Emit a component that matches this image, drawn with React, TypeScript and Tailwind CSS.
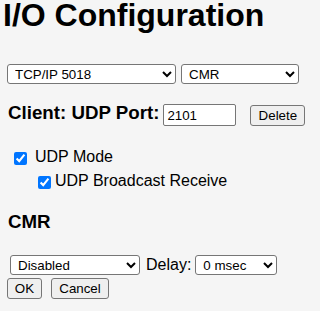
export default function App() {
  const font = "font-['Liberation_Sans',Arial,sans-serif]";

  return (
    <div className={`min-h-[311px] w-[320px] overflow-hidden bg-[#f5f5f5] text-black ${font}`}>
      {/* title */}
      <h1 className="h-[30px] pl-[3px] text-[32px] font-bold leading-[30px] whitespace-nowrap">
        I/O Configuration
      </h1>

      {/* port + protocol */}
      <div className="mt-[34px] flex h-[20px] pl-[7px]">
        <select
          defaultValue="tcp"
          className="h-[20px] w-[169px] rounded-[3px] border border-[#767676] bg-white pl-[3px] text-[13.33px] text-black"
        >
          <option value="tcp">TCP/IP 5018</option>
        </select>
        <select
          defaultValue="cmr"
          className="ml-[5px] h-[20px] w-[118px] rounded-[3px] border border-[#767676] bg-white pl-[3px] text-[13.33px] text-black"
        >
          <option value="cmr">CMR</option>
        </select>
      </div>

      {/* client row */}
      <div className="mt-[18px] flex h-[24px] items-start pl-[8px]">
        <span className="text-[18.72px] font-bold leading-[22px] whitespace-nowrap">Client: UDP Port:</span>
        <input
          defaultValue="2101"
          className="ml-[4px] mt-[2px] h-[22px] w-[73px] rounded-[2px] border border-[#767676] bg-white px-[3px] text-[13.33px] outline-none"
        />
        <button className="ml-[14px] mt-[3px] h-[21px] w-[55px] rounded-[3px] border border-[#767676] bg-[#efefef] text-[13.33px]">
          Delete
        </button>
      </div>

      {/* checkboxes */}
      <div className="mt-[19px] flex h-[24px] items-start pl-[14px]">
        <input type="checkbox" defaultChecked className="mt-[7px] h-[13px] w-[13px] accent-[#0075ff]" />
        <span className="ml-[8px] text-[16px] leading-[24px]">UDP Mode</span>
      </div>
      <div className="flex h-[24px] items-start pl-[38px]">
        <input type="checkbox" defaultChecked className="mt-[7px] h-[13px] w-[13px] accent-[#0075ff]" />
        <span className="ml-[4px] text-[16px] leading-[24px]">UDP Broadcast Receive</span>
      </div>

      {/* CMR section */}
      <h3 className="mt-[18px] h-[22px] pl-[8px] text-[18.72px] font-bold leading-[22px]">CMR</h3>

      <div className="mt-[22px] flex h-[20px] items-start pl-[10px]">
        <select
          defaultValue="disabled"
          className="h-[20px] w-[130px] rounded-[3px] border border-[#767676] bg-white pl-[3px] text-[13.33px] text-black"
        >
          <option value="disabled">Disabled</option>
        </select>
        <span className="ml-[6px] text-[16px] leading-[20px]">Delay:</span>
        <select
          defaultValue="0"
          className="ml-[4px] h-[20px] w-[82px] rounded-[3px] border border-[#767676] bg-white pl-[3px] text-[13.33px] text-black"
        >
          <option value="0">0 msec</option>
        </select>
      </div>

      <div className="mt-[3px] flex pl-[7px]">
        <button className="h-[21px] w-[35px] rounded-[3px] border border-[#767676] bg-[#efefef] text-[13.33px]">
          OK
        </button>
        <button className="ml-[9px] h-[21px] w-[58px] rounded-[3px] border border-[#767676] bg-[#efefef] text-[13.33px]">
          Cancel
        </button>
      </div>
    </div>
  );
}
